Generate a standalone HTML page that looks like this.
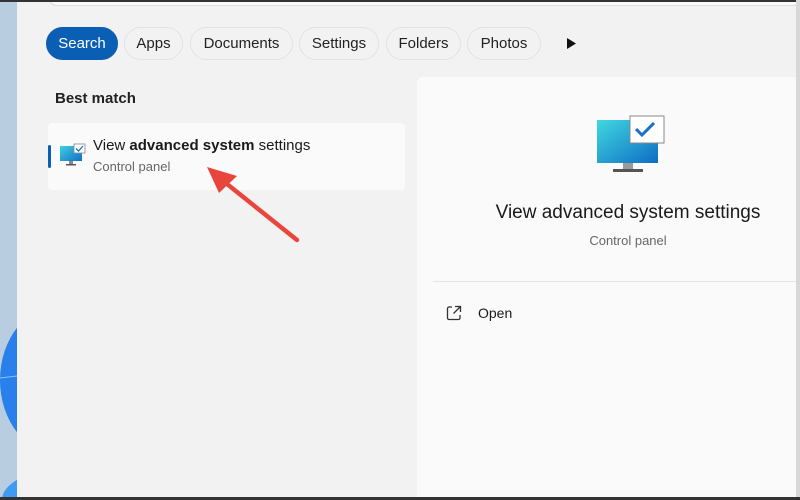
<!DOCTYPE html>
<html><head><meta charset="utf-8"><style>
*{margin:0;padding:0;box-sizing:border-box}
html,body{overflow:hidden}
body{width:800px;height:500px;background:#f2f2f2;font-family:"Liberation Sans",sans-serif;position:relative;color:#1a1a1a}
.strip{position:absolute;left:0;top:0;width:17px;height:500px;background:#b9cde0;overflow:hidden}
.main{position:absolute;left:17px;top:0;width:783px;height:500px;background:#f2f2f2}
.topbar{position:absolute;left:0;top:0;width:800px;height:2px;background:#333}
.sbox{position:absolute;left:50px;top:0;width:750px;height:6px;background:#fafafa;border:1px solid #ddd;border-top:none;border-radius:0 0 6px 6px}
.botbar{position:absolute;left:0;top:497px;width:800px;height:3px;background:#333}
.pill{position:absolute;top:27px;height:33px;border:1px solid #e2e2e2;border-radius:17px;background:#f2f2f2;font-size:15px;line-height:31px;text-align:center;color:#222}
.pill.on{background:#0a5fb4;color:#fff;border-color:#0a5fb4}
.card{position:absolute;left:48px;top:123px;width:357px;height:67px;background:#fafafa;border-radius:4px}
.rp{position:absolute;left:417px;top:77px;width:379px;height:420px;background:#fafafa;border-radius:6px 0 0 0}
.redge{position:absolute;left:796px;top:0;width:4px;height:500px;background:#d8d8d8}
</style></head><body>
<div class="strip"><svg width="17" height="500"><ellipse cx="60" cy="380" rx="60" ry="75" fill="#2a80ea"/><path d="M0 378 L17 376" stroke="#8cc0f5" stroke-width="1"/><ellipse cx="60" cy="500" rx="58" ry="30" fill="#3f9bf2"/></svg></div>
<div class="main"></div>
<div class="sbox"></div>
<div class="topbar"></div>
<div class="pill on" style="left:46px;width:72px">Search</div>
<div class="pill" style="left:124px;width:59px">Apps</div>
<div class="pill" style="left:190px;width:103px">Documents</div>
<div class="pill" style="left:299px;width:80px">Settings</div>
<div class="pill" style="left:386px;width:75px">Folders</div>
<div class="pill" style="left:467px;width:74px">Photos</div>
<svg style="position:absolute;left:566px;top:37px" width="11" height="13"><path d="M1 1 L10 6.5 L1 12Z" fill="#111"/></svg>
<div style="position:absolute;left:55px;top:90px;font-size:15px;font-weight:bold;color:#222">Best match</div>
<div class="card"></div>
<div style="position:absolute;left:48px;top:145px;width:3px;height:23px;background:#0a5fb4;border-radius:2px"></div>
<svg style="position:absolute;left:59px;top:143px" width="28" height="26" viewBox="0 0 28 26"><defs><linearGradient id="g1" x1="0" y1="0" x2="1" y2="1"><stop offset="0" stop-color="#3fd0de"/><stop offset="1" stop-color="#1070c8"/></linearGradient></defs><rect x="1" y="3" width="22" height="15" fill="url(#g1)"/><rect x="10" y="18" width="4" height="3" fill="#888"/><rect x="7" y="21" width="10" height="1.5" fill="#555"/><rect x="15" y="1" width="11" height="9" fill="#fff" stroke="#888" stroke-width="0.8"/><path d="M17 5.5 L19.5 8 L24 3" fill="none" stroke="#1a6fc8" stroke-width="1.3"/></svg>
<div style="position:absolute;left:93px;top:137px;font-size:15px;color:#1a1a1a">View <b>advanced system</b> settings</div>
<div style="position:absolute;left:93px;top:159px;font-size:13px;color:#666">Control panel</div>
<div class="rp"></div>
<div class="redge"></div>
<svg style="position:absolute;left:596px;top:115px" width="70" height="62" viewBox="0 0 70 62"><defs><linearGradient id="g2" x1="0" y1="0" x2="1" y2="1"><stop offset="0" stop-color="#3fd8e0"/><stop offset="1" stop-color="#0f6cc4"/></linearGradient></defs><rect x="1" y="5" width="61" height="43" fill="url(#g2)"/><rect x="27" y="48" width="10" height="6" fill="#9a9a9a"/><rect x="17" y="54" width="30" height="3" fill="#555"/><rect x="34" y="1" width="34" height="27" fill="#fff" stroke="#888" stroke-width="1"/><path d="M40 14 L46 20 L58 8" fill="none" stroke="#1a6fc8" stroke-width="3"/></svg>
<div style="position:absolute;left:417px;top:202px;width:379px;text-align:center;font-size:19px;color:#1a1a1a;padding-left:43px">View advanced system settings</div>
<div style="position:absolute;left:417px;top:233px;width:379px;text-align:center;font-size:13px;color:#666;padding-left:43px">Control panel</div>
<div style="position:absolute;left:433px;top:281px;width:363px;height:1px;background:#e4e4e4"></div>
<svg style="position:absolute;left:446px;top:305px" width="16" height="16" viewBox="0 0 16 16"><path d="M6 2 H3 a1.5 1.5 0 0 0 -1.5 1.5 V13 a1.5 1.5 0 0 0 1.5 1.5 H12.5 a1.5 1.5 0 0 0 1.5 -1.5 V10" fill="none" stroke="#333" stroke-width="1.3"/><path d="M9 1.5 H14.5 V7 M14.5 1.5 L7.5 8.5" fill="none" stroke="#333" stroke-width="1.3"/></svg>
<div style="position:absolute;left:478px;top:305px;font-size:14px;color:#1a1a1a">Open</div>
<svg style="position:absolute;left:0;top:0" width="800" height="500"><line x1="297" y1="240" x2="222" y2="180" stroke="#e8463c" stroke-width="4.5" stroke-linecap="round"/><path d="M207 167 L237 176 L219 193Z" fill="#e8463c"/></svg>
<div class="botbar"></div>
</body></html>
